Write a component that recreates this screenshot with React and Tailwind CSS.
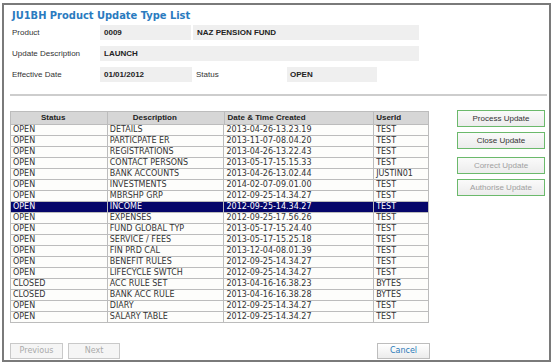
import React from 'react';

const rows = [
    ['OPEN', 'DETAILS', '2013-04-26-13.23.19', 'TEST'],
    ['OPEN', 'PARTICPATE ER', '2013-11-07-08.04.20', 'TEST'],
    ['OPEN', 'REGISTRATIONS', '2013-04-26-13.22.43', 'TEST'],
    ['OPEN', 'CONTACT PERSONS', '2013-05-17-15.15.33', 'TEST'],
    ['OPEN', 'BANK ACCOUNTS', '2013-04-26-13.02.44', 'JUSTIN01'],
    ['OPEN', 'INVESTMENTS', '2014-02-07-09.01.00', 'TEST'],
    ['OPEN', 'MBRSHP GRP', '2012-09-25-14.34.27', 'TEST'],
    ['OPEN', 'INCOME', '2012-09-25-14.34.27', 'TEST'],
    ['OPEN', 'EXPENSES', '2012-09-25-17.56.26', 'TEST'],
    ['OPEN', 'FUND GLOBAL TYP', '2013-05-17-15.24.40', 'TEST'],
    ['OPEN', 'SERVICE / FEES', '2013-05-17-15.25.18', 'TEST'],
    ['OPEN', 'FIN PRD CAL', '2013-12-04-08.01.39', 'TEST'],
    ['OPEN', 'BENEFIT RULES', '2012-09-25-14.34.27', 'TEST'],
    ['OPEN', 'LIFECYCLE SWTCH', '2012-09-25-14.34.27', 'TEST'],
    ['CLOSED', 'ACC RULE SET', '2013-04-16-16.38.23', 'BYTES'],
    ['CLOSED', 'BANK ACC RULE', '2013-04-16-16.38.28', 'BYTES'],
    ['OPEN', 'DIARY', '2012-09-25-14.34.27', 'TEST'],
    ['OPEN', 'SALARY TABLE', '2012-09-25-14.34.27', 'TEST'],
];

const colW = ['w-[97px]', 'w-[117px]', 'w-[150px]', 'w-[55px]'];
// header text sits a little left of centre in the original
const headPad = ['pl-[30px]', 'pl-[25px]', 'pl-[3px]', 'pl-[2px]'];

function SideButton({ label, disabled, className = '' }) {
    return (
        <button
            className={`w-[88px] h-[17px] border border-[#6bb96b] bg-gradient-to-b from-[#fafafa] to-[#ececec] text-[8px] leading-none font-['Liberation_Sans',Arial,sans-serif] ${
                disabled ? 'text-[#a0a0a0]' : 'text-[#333]'
            } ${className}`}
        >
            {label}
        </button>
    );
}

function App() {
    return (
        <div className="w-[554px] h-[362px] bg-white overflow-hidden">
            <div className="ml-[2px] mt-[3px] w-[549px] h-[359px] border-2 border-[#7a7a7a] flex flex-col">
                {/* title */}
                <h1 className="mt-[4px] ml-[8px] h-[13px] leading-[13px] text-[11px] font-bold text-[#2a7bbf] font-['DejaVu_Sans_Condensed','DejaVu_Sans',Verdana,sans-serif] [font-stretch:condensed]">
                    JU1BH Product Update Type List
                </h1>

                {/* header form */}
                <div className="ml-[8px] mt-[3px] flex flex-col gap-[6px] text-[8px] font-['Liberation_Sans',Arial,sans-serif] text-[#333]">
                    <div className="flex items-center h-[15px]">
                        <span className="w-[88px]">Product</span>
                        <div className="w-[91px] h-full bg-[#efefef] flex items-center pl-[4px] font-bold text-[#222]">0009</div>
                        <div className="ml-[2px] w-[226px] h-full bg-[#efefef] flex items-center pl-[4px] font-bold text-[#222]">NAZ PENSION FUND</div>
                    </div>
                    <div className="flex items-center h-[15px]">
                        <span className="w-[88px]">Update Description</span>
                        <div className="w-[319px] h-full bg-[#efefef] flex items-center pl-[4px] font-bold text-[#222]">LAUNCH</div>
                    </div>
                    <div className="flex items-center h-[15px]">
                        <span className="w-[88px]">Effective Date</span>
                        <div className="w-[92px] h-full bg-[#efefef] flex items-center pl-[4px] font-bold text-[#222]">01/01/2012</div>
                        <span className="w-[95px] pl-[4px]">Status</span>
                        <div className="w-[90px] h-full bg-[#efefef] flex items-center pl-[3px] font-bold text-[#222]">OPEN</div>
                    </div>
                </div>

                <div className="ml-[6px] mt-[12px] w-[537px] h-[2px] bg-[#cdcdcd]" />

                {/* table + actions */}
                <div className="mt-[14px] ml-[6px] flex items-start">
                    <div className="mt-[1px] w-[419px] border-t border-l border-[#bcbcbc] font-['DejaVu_Sans',Verdana,sans-serif] text-[8px]">
                        <div className="flex h-[13px] bg-[#d6d6d6] text-[#222] font-bold font-['Liberation_Sans',Arial,sans-serif]">
                            {['Status', 'Description', 'Date & Time Created', 'UserId'].map((h, i) => (
                                <div
                                    key={h}
                                    className={`${colW[i]} ${headPad[i]} border-r border-b border-[#bcbcbc] flex items-center`}
                                >
                                    {h}
                                </div>
                            ))}
                        </div>
                        {rows.map((r, idx) => {
                            const sel = idx === 7;
                            return (
                                <div
                                    key={idx}
                                    className={`flex h-[11px] ${sel ? 'bg-[#06066a] text-white' : 'bg-[#fdfdfb] text-[#333]'}`}
                                >
                                    {r.map((c, i) => (
                                        <div
                                            key={i}
                                            className={`${colW[i]} border-r border-b border-[#bcbcbc] pl-[2px] leading-[10px] whitespace-nowrap overflow-hidden`}
                                        >
                                            {c}
                                        </div>
                                    ))}
                                </div>
                            );
                        })}
                    </div>

                    <div className="ml-[28px] flex flex-col">
                        <SideButton label="Process Update" />
                        <SideButton label="Close Update" className="mt-[5px]" />
                        <SideButton label="Correct Update" disabled className="mt-[8px]" />
                        <SideButton label="Authorise Update" disabled className="mt-[5px]" />
                    </div>
                </div>

                {/* bottom buttons */}
                <div className="mt-[20px] ml-[6px] flex items-center font-['DejaVu_Sans',Verdana,sans-serif] text-[8px]">
                    <button className="w-[53px] h-[16px] border border-[#c9c9c9] bg-[#f5f5f5] text-[#aaa]">Previous</button>
                    <button className="ml-[5px] w-[52px] h-[16px] border border-[#c9c9c9] bg-[#f5f5f5] text-[#aaa]">Next</button>
                    <button className="ml-[257px] w-[53px] h-[16px] border border-[#bdbdbd] bg-gradient-to-b from-white to-[#ececec] text-[#2b7ab9]">Cancel</button>
                </div>
            </div>
        </div>
    );
}

export default App;
